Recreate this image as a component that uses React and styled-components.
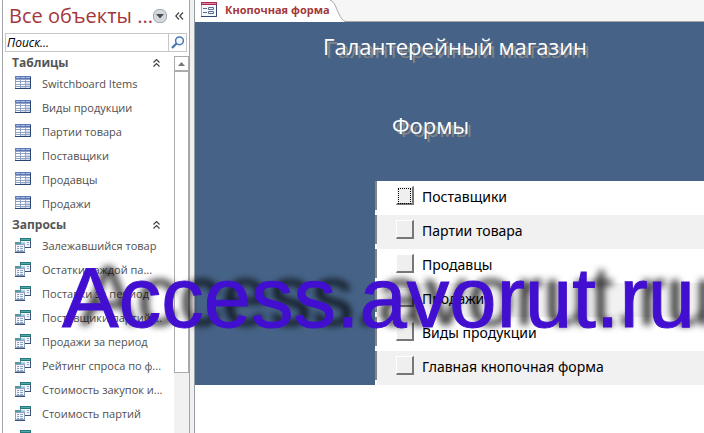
import React, { useState } from "react"
import styled, { createGlobalStyle } from "styled-components"

const GlobalStyle = createGlobalStyle`
  * {
    box-sizing: border-box;
  }

  body {
    margin: 0;
    background: #fff;
    font-family: "Open Sans", "Noto Sans", sans-serif;
  }
`

const Window = styled.div`
  display: flex;
  position: relative;
  height: 100vh;
  overflow: hidden;
`

const Sidebar = styled.nav`
  display: flex;
  flex-direction: column;
  flex: none;
  width: 188px;
  margin-left: 2px;
  border: solid #a0a3aa;
  border-width: 0 1px;
`

const SidebarHeader = styled.div`
  display: flex;
  flex: none;
  align-items: center;
  height: 33px;
  padding: 0 5px 2px 6px;
`

const SidebarTitle = styled.h1`
  flex: 1;
  margin: 0;
  color: #a4373a;
  font-size: 20px;
  font-weight: normal;
  line-height: 30px;
  white-space: nowrap;
`

const IconButton = styled.button`
  display: flex;
  align-items: center;
  justify-content: center;
  padding: 0;
  border: 0;
  background: none;
  cursor: pointer;
`

const HeaderButton = styled(IconButton)`
  height: 28px;
  margin-right: 4px;

  & + & {
    margin: 0 0 0 4px;
  }
`

const SearchBox = styled.form`
  display: flex;
  flex: none;
  height: 19px;
  margin: 0 2px 4px;
  border: 1px solid #c6c6c6;
`

const SearchInput = styled.input`
  flex: 1;
  min-width: 0;
  padding: 0 1px;
  border: 0;
  outline: 0;
  font-family: inherit;
  font-size: 12px;
  font-style: italic;

  &::placeholder {
    color: #000;
    opacity: 1;
  }
`

const SearchButton = styled(IconButton)`
  width: 18px;
  border-left: 1px solid #c6c6c6;
`

const SidebarBody = styled.div`
  display: flex;
  flex: 1;
  min-height: 0;
`

const Groups = styled.div`
  flex: 1;
  min-width: 0;
  margin-top: -2px;
  overflow: hidden;
`

const GroupHeader = styled.div`
  display: flex;
  align-items: center;
  justify-content: space-between;
  height: 18px;
  padding: 0 14px 0 9px;
`

const GroupTitle = styled.h2`
  margin: 0;
  color: #555;
  font-size: 12px;
  font-weight: bold;
  line-height: 18px;
`

const ItemList = styled.ul`
  margin: 0;
  padding: 0;
  list-style: none;
`

const Item = styled.a`
  display: flex;
  align-items: center;
  gap: 10px;
  height: 24px;
  padding: 0 0 2px 12px;
  color: #505050;
  font-size: 11px;
  text-decoration: none;
  white-space: nowrap;

  &:hover {
    background: #f4e3e3;
  }
`

const Scrollbar = styled.div`
  display: flex;
  flex-direction: column;
  flex: none;
  width: 15px;
  background: #f1f1f1;
`

const ScrollUp = styled(IconButton)`
  flex: none;
  height: 15px;
  border: 1px solid #ababab;
  background: #fff;
`

const ScrollThumb = styled.div`
  height: 80%;
  border: 1px solid #ababab;
  background: #fff;
`

const Splitter = styled.div`
  flex: none;
  width: 5px;
  border-right: 1px solid #9a9ca3;
  background: #eff0f2;
`

const Main = styled.main`
  flex: 1;
  min-width: 0;
`

const TabStrip = styled.div`
  display: flex;
  height: 22px;
  border-bottom: 1px solid #a5a5a5;
  background: #f6f6f6;
`

const Tab = styled.button`
  display: flex;
  align-items: center;
  gap: 8px;
  height: 22px;
  padding: 0 0 3px 6px;
  border: 0;
  background: #fff;
  color: #a4373a;
  font-family: inherit;
  font-size: 11px;
  font-weight: bold;
  white-space: nowrap;
`

const TabEdge = styled.svg`
  flex: none;
`

const Form = styled.section`
  background: #466387;
  overflow: hidden;
`

const FormHeader = styled.header`
  height: 159px;
  padding: 7px 0 0 128px;
`

const FormTitle = styled.h2`
  margin: 0 0 45px ${({ indent }) => indent || "0"};
  color: #fff;
  font-size: 22px;
  font-weight: normal;
  line-height: 34px;
  text-shadow: 3px 3px 0 #858585;
  white-space: nowrap;
`

const FormRows = styled.div`
  margin-left: 180px;
  background: #fff;
`

const FormRow = styled.div`
  display: flex;
  align-items: center;
  gap: 8px;
  height: 34px;
  background: linear-gradient(
    to right,
    #fff 2px,
    ${({ shaded }) => (shaded ? "#f1f1f1" : "#fff")} 2px
  );

  &::before {
    content: "";
    align-self: flex-start;
    width: 2px;
    height: 29px;
    margin-right: 11px;
    background: #848484;
  }
`

const RowButton = styled.button`
  width: 18px;
  height: 19px;
  margin-bottom: 5px;
  padding: 1px;
  border: solid;
  border-width: 1px 2px 2px 1px;
  border-color: #fff #777 #777 #fff;
  background: #efefef;

  &::after {
    content: "";
    display: block;
    height: 14px;
    border: ${({ focused }) => (focused ? "1px dotted #000" : "0")};
  }
`

const RowLabel = styled.label`
  padding-bottom: 4px;
  color: #000;
  font-family: "Noto Sans", sans-serif;
  font-size: 14px;
  white-space: nowrap;
`

const Watermark = styled.div`
  position: absolute;
  top: 250px;
  left: 62px;
  color: #420fd0;
  font-family: "Liberation Sans", Arial, sans-serif;
  font-size: 85px;
  line-height: 96px;
  text-shadow: 18px -2px 7px rgba(0, 0, 0, 0.8);
  -webkit-text-stroke: 1px #420fd0;
  white-space: nowrap;
  pointer-events: none;
`

function TableIcon() {
  return (
    <svg width="17" height="14" viewBox="0 0 17 14" aria-hidden="true">
      <path d="M0 0h16v13H0z" fill="#8fa3c6" />
      <path d="M0 0h16v3H0z" fill="#5c7ab5" />
      <path d="M1 1h4v1H1zM6 1h4v1H6zM11 1h4v1h-4z" fill="#a9bde0" />
      <path
        d="M1 4h4v1H1zM6 4h4v1H6zM11 4h4v1h-4zM1 6h4v2H1zM6 6h4v2H6zM1 9h4v1H1zM6 9h4v1H6zM1 11h4v1H1z"
        fill="#fff"
      />
      <path d="M11 6h4v2h-4zM11 9h4v1h-4zM6 11h4v1H6zM11 11h4v1h-4z" fill="#d5e0f4" />
      <path d="M0 12.500h15.500V1" fill="none" stroke="#2d4470" />
    </svg>
  )
}

function QueryIcon() {
  return (
    <svg width="17" height="15" viewBox="0 0 17 15" aria-hidden="true">
      <path d="M5 0h11v10H5z" fill="#6e86a8" />
      <path d="M6 3h9v6H6z" fill="#f4f8fd" />
      <path d="M5 0h11v3H5z" fill="#23797c" />
      <path d="M6 1h9v1H6z" fill="#5fa5a7" />
      <path d="M12 4h2v1h-2zM12 6h2v1h-2z" fill="#8ca0c6" />
      <path d="M0 4h10v11H0z" fill="#8ba0c0" />
      <path d="M1 7h8v6H1z" fill="#f4f8fd" />
      <path d="M0 4h10v2H0z" fill="#55999c" />
      <path d="M6 4h4v2H6z" fill="#a9cfdb" />
      <path d="M2 8h2v1H2zM5 8h3v1H5zM2 10h2v1H2zM5 10h3v1H5zM2 12h2v1H2zM5 12h3v1H5z" fill="#8ca0c6" />
      <path d="M0 14.500h10M15.500 3v7M10 9.500h6" stroke="#3c5377" />
    </svg>
  )
}

function FormIcon() {
  return (
    <svg width="16" height="15" viewBox="0 0 16 15" aria-hidden="true">
      <path d="M0 0h16v15H0z" fill="#9aa8c6" />
      <path d="M1 3h14v11H1z" fill="#f4f7fc" />
      <path d="M0 0h16v3H0z" fill="#a82b55" />
      <path d="M1 1h14v1H1z" fill="#dc83a3" />
      <path
        d="M2 6.500h4M2 10.500h4M7.500 5.500h5v2h-5zM7.500 9.500h5v2h-5z"
        fill="none"
        stroke="#5b6c90"
      />
      <path d="M0 14.500h15.500V3" fill="none" stroke="#33466f" />
    </svg>
  )
}

function MenuIcon() {
  return (
    <svg width="14" height="14" viewBox="0 0 14 14" aria-hidden="true">
      <rect x="0.500" y="0.500" width="13" height="13" rx="5.500" fill="#d5d8dd" stroke="#a3a6ad" />
      <path d="M3 5h8L7 9.500z" fill="#474955" />
    </svg>
  )
}

function CollapseIcon() {
  return (
    <svg width="9" height="8" viewBox="0 0 9 8" aria-hidden="true">
      <path d="M4 .5L.8 4 4 7.500M8 .5L4.800 4 8 7.500" fill="none" stroke="#444" strokeWidth="1.200" />
    </svg>
  )
}

function ChevronsIcon() {
  return (
    <svg width="7" height="8" viewBox="0 0 7 8" aria-hidden="true">
      <path d="M.5 3.500l3-3 3 3M.5 7.500l3-3 3 3" fill="none" stroke="#444" strokeWidth="1.200" />
    </svg>
  )
}

function SearchIcon() {
  return (
    <svg width="14" height="13" viewBox="0 0 14 13" aria-hidden="true">
      <path d="M5.500 7.500L1 12" stroke="#4d79b0" strokeWidth="2.400" />
      <circle cx="8.500" cy="4.800" r="3.900" fill="#f5f9fe" stroke="#4779b5" strokeWidth="1.500" />
    </svg>
  )
}

const groups = [
  {
    title: "Таблицы",
    Icon: TableIcon,
    items: [
      "Switchboard Items",
      "Виды продукции",
      "Партии товара",
      "Поставщики",
      "Продавцы",
      "Продажи",
    ],
  },
  {
    title: "Запросы",
    Icon: QueryIcon,
    items: [
      "Залежавшийся товар",
      "Остатки каждой па...",
      "Поставки за период",
      "Поставщики партий ...",
      "Продажи за период",
      "Рейтинг спроса по ф...",
      "Стоимость закупок и...",
      "Стоимость партий",
      "",
    ],
  },
]

const rows = [
  "Поставщики",
  "Партии товара",
  "Продавцы",
  "Продажи",
  "Виды продукции",
  "Главная кнопочная форма",
]

function Group({ title, Icon, items }) {
  const [open, setOpen] = useState(true)

  return (
    <section>
      <GroupHeader>
        <GroupTitle>{title}</GroupTitle>
        <IconButton aria-label={title} onClick={() => setOpen(!open)}>
          <ChevronsIcon />
        </IconButton>
      </GroupHeader>
      {open && (
        <ItemList>
          {items.map(item => (
            <li key={item}>
              <Item href="#">
                <Icon />
                {item}
              </Item>
            </li>
          ))}
        </ItemList>
      )}
    </section>
  )
}

function NavigationPane() {
  const [query, setQuery] = useState("")

  return (
    <Sidebar>
      <SidebarHeader>
        <SidebarTitle>Все объекты ...</SidebarTitle>
        <HeaderButton aria-label="Меню">
          <MenuIcon />
        </HeaderButton>
        <HeaderButton aria-label="Свернуть">
          <CollapseIcon />
        </HeaderButton>
      </SidebarHeader>
      <SearchBox onSubmit={e => e.preventDefault()}>
        <SearchInput
          aria-label="Поиск"
          placeholder="Поиск..."
          value={query}
          onChange={e => setQuery(e.target.value)}
        />
        <SearchButton aria-label="Найти">
          <SearchIcon />
        </SearchButton>
      </SearchBox>
      <SidebarBody>
        <Groups>
          {groups.map(group => (
            <Group key={group.title} {...group} />
          ))}
        </Groups>
        <Scrollbar>
          <ScrollUp aria-label="Вверх">
            <svg width="7" height="4" viewBox="0 0 7 4" aria-hidden="true">
              <path d="M0 4h7L3.500 0z" fill="#777" />
            </svg>
          </ScrollUp>
          <ScrollThumb />
        </Scrollbar>
      </SidebarBody>
    </Sidebar>
  )
}

function Switchboard() {
  return (
    <Form>
      <FormHeader>
        <FormTitle>Галантерейный магазин</FormTitle>
        <FormTitle indent="69px">Формы</FormTitle>
      </FormHeader>
      <FormRows>
        {rows.map((row, i) => (
          <FormRow key={row} shaded={i % 2 === 1}>
            <RowButton id={`row-${i}`} focused={i === 0} />
            <RowLabel htmlFor={`row-${i}`}>{row}</RowLabel>
          </FormRow>
        ))}
      </FormRows>
    </Form>
  )
}

export default function App() {
  return (
    <>
      <GlobalStyle />
      <Window>
        <NavigationPane />
        <Splitter />
        <Main>
          <TabStrip>
            <Tab>
              <FormIcon />
              Кнопочная форма
            </Tab>
            <TabEdge width="18" height="22" viewBox="0 0 18 22" aria-hidden="true">
              <path d="M0 0c5 2 6 8 8 12s4 9 8 10H0z" fill="#fff" />
              <path d="M0 0c5 2 6 8 8 12s4 9 8 9.500" fill="none" stroke="#a5a5a5" />
            </TabEdge>
          </TabStrip>
          <Switchboard />
        </Main>
        <Watermark>Access.avorut.ru</Watermark>
      </Window>
    </>
  )
}
